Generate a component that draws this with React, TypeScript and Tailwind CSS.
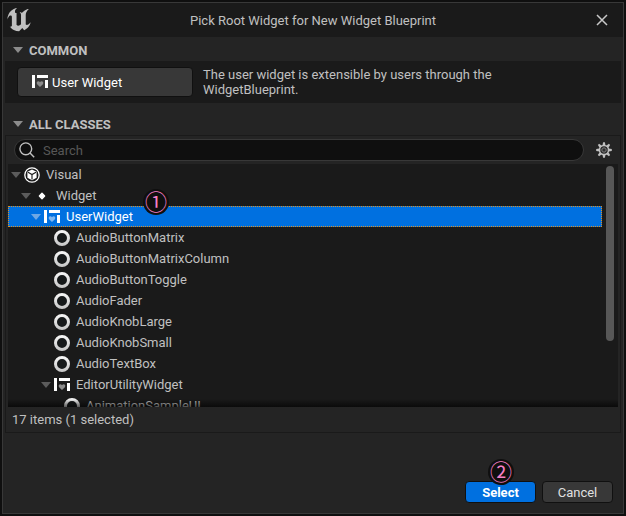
import { useState } from "react";
import clsx from "clsx";

type IconKind = "visual" | "dot" | "widget" | "ring";

interface TreeNode {
  name: string;
  icon: IconKind;
  depth: number;
  hasChildren?: boolean;
}

const nodes: TreeNode[] = [
  { name: "Visual", icon: "visual", depth: 0, hasChildren: true },
  { name: "Widget", icon: "dot", depth: 1, hasChildren: true },
  { name: "UserWidget", icon: "widget", depth: 2, hasChildren: true },
  { name: "AudioButtonMatrix", icon: "ring", depth: 3 },
  { name: "AudioButtonMatrixColumn", icon: "ring", depth: 3 },
  { name: "AudioButtonToggle", icon: "ring", depth: 3 },
  { name: "AudioFader", icon: "ring", depth: 3 },
  { name: "AudioKnobLarge", icon: "ring", depth: 3 },
  { name: "AudioKnobSmall", icon: "ring", depth: 3 },
  { name: "AudioTextBox", icon: "ring", depth: 3 },
  { name: "EditorUtilityWidget", icon: "widget", depth: 3, hasChildren: true },
  { name: "AnimationSampleUI", icon: "ring", depth: 4 },
];

const indents = ["pl-[3px]", "pl-[13px]", "pl-[23px]", "pl-[33px]", "pl-[43px]"];

function UnrealLogo() {
  return (
    <svg viewBox="4.4 5.2 14.9 14.3" className="w-6 h-6 shrink-0" fill="#c0c0c0" aria-hidden="true">
      <path d="M19.13 13.729c-.206.997-1.126 3.557-4.06 4.942l-1.179-1.325-1.988 2a7.338 7.338 0 01-5.804-2.978 2.859 2.859 0 00.65.123c.326.006.678-.114.678-.66v-5.394a.89.89 0 00-1.116-.89c-.92.212-1.656 2.509-1.656 2.509a7.304 7.304 0 012.528-5.597 7.408 7.408 0 013.73-1.721c-1.006.573-1.57 1.507-1.57 2.29 0 1.262.76 1.109.984.923v7.28a1.157 1.157 0 00.148.256 1.075 1.075 0 00.88.445c.76 0 1.747-.868 1.747-.868V9.172c0-.6-.452-1.324-.905-1.572 0 0 .838-.149 1.484.346a5.537 5.537 0 01.387-.425c1.508-1.48 2.929-1.902 4.112-2.112 0 0-2.151 1.69-2.151 3.96 0 1.687.043 5.801.043 5.801.799.771 1.986-.342 3.059-1.441z" />
    </svg>
  );
}

function Arrow({ className }: { className?: string }) {
  return (
    <svg viewBox="0 0 10 6" className={clsx("w-[10px] h-[6px] shrink-0", className)} fill="currentColor" aria-hidden="true">
      <path d="M0 0h10L5 6z" />
    </svg>
  );
}

function WidgetIcon({ heart = "#8c8c8c" }: { heart?: string }) {
  return (
    <svg viewBox="0 0 16 16" className="w-4 h-4 shrink-0" fill="#fff" aria-hidden="true">
      <path d="M0 1h3v13H0zM5 1h11v3H5zM13 6h3v8h-3z" />
      <path fill={heart} d="M8 13 5.1 10.2C4.1 8.6 5 7.2 6.3 7.2c.8 0 1.3.4 1.7 1 .4-.6.9-1 1.7-1 1.3 0 2.2 1.4 1.2 3z" />
    </svg>
  );
}

function VisualIcon() {
  return (
    <svg viewBox="0 0 16 16" className="w-4 h-4 shrink-0" aria-hidden="true">
      <circle cx="8" cy="8" r="7.2" fill="none" stroke="#fff" strokeWidth="1.3" />
      <path fill="#fff" d="M8 2.6 12.6 4.8v5.9L8 13.3l-4.6-2.6V4.8z" />
      <path fill="none" stroke="#1a1a1a" strokeWidth="1.1" d="M4 5.3 8 7.6l4-2.3M8 7.6v5" />
    </svg>
  );
}

function RingIcon() {
  return (
    <svg viewBox="0 0 16 16" className="w-4 h-4 shrink-0" aria-hidden="true">
      <defs>
        <linearGradient id="ring" x1="0" y1="0" x2="0" y2="1">
          <stop offset="0" stopColor="#f4f4f4" />
          <stop offset="1" stopColor="#cacaca" />
        </linearGradient>
      </defs>
      <circle cx="8" cy="8" r="6.5" fill="#16191a" stroke="url(#ring)" strokeWidth="3" />
    </svg>
  );
}

function DotIcon() {
  return (
    <svg viewBox="0 0 16 16" className="w-4 h-4 shrink-0" aria-hidden="true">
      <path fill="#fff" d="M8 5.2 10.6 8 8 10.8 5.4 8z" stroke="#fff" strokeWidth="1.4" strokeLinejoin="round" />
    </svg>
  );
}

function GearIcon() {
  return (
    <svg viewBox="-8 -8 16 16" className="w-4 h-4" aria-hidden="true">
      <g fill="#c0c0c0">
        {[0, 45, 90, 135, 180, 225, 270, 315].map((a) => (
          <path key={a} transform={`rotate(${a})`} d="M-1.5-4.6-.9-7.8H.9L1.5-4.6z" />
        ))}
      </g>
      <circle r="4.5" fill="none" stroke="#c0c0c0" strokeWidth="1.5" />
      <circle r="2.2" fill="#303030" stroke="#808080" strokeWidth="1" />
    </svg>
  );
}

function NodeIcon({ kind, selected }: { kind: IconKind; selected: boolean }) {
  if (kind === "visual") return <VisualIcon />;
  if (kind === "dot") return <DotIcon />;
  if (kind === "widget") return <WidgetIcon heart={selected ? "#7fb7f0" : "#8c8c8c"} />;
  return <RingIcon />;
}

function StepBadge({ label, className }: { label: string; className: string }) {
  return (
    <span
      className={clsx(
        "absolute z-10 flex items-center justify-center w-[26px] h-[26px] pb-1 rounded-full bg-[#0f0f0f] text-[#f57fc6] text-[22px] leading-none font-['Noto_Sans_CJK_JP',sans-serif] pointer-events-none",
        className
      )}
    >
      {label}
    </span>
  );
}

function SectionHeader({ title, className }: { title: string; className: string }) {
  return (
    <h2 className={clsx("flex items-center gap-[6px] pl-[10px] font-bold text-[#c0c0c0]", className)}>
      <Arrow className="text-[#8c8c8c]" />
      {title}
    </h2>
  );
}

function App() {
  const [selected, setSelected] = useState("UserWidget");
  const [search, setSearch] = useState("");

  const visible = nodes.filter((n) => n.name.toLowerCase().includes(search.toLowerCase()));

  return (
    <div className="h-screen p-[2px] bg-[#0f0f0f] font-[Roboto,sans-serif] text-[13px] leading-[15px] text-[#c0c0c0]">
      <div className="flex flex-col h-full border border-[#383838] bg-[#242424] overflow-hidden">
        <header className="flex items-center h-[34px] shrink-0 px-1 bg-[#1a1a1a]">
          <div className="flex-1">
            <UnrealLogo />
          </div>
          <h1>Pick Root Widget for New Widget Blueprint</h1>
          <div className="flex flex-1 justify-end">
            <button aria-label="Close" className="flex items-center justify-center w-[34px] h-6">
              <svg viewBox="0 0 12 12" className="w-3 h-3" stroke="#c8c8c8" strokeWidth="1.5" aria-hidden="true">
                <path d="M1 1l10 10M11 1 1 11" />
              </svg>
            </button>
          </div>
        </header>

        <SectionHeader title="COMMON" className="h-6 shrink-0 pt-[2px]" />
        <section className="flex items-center gap-[10px] mx-[2px] px-3 h-[42px] shrink-0 bg-[#1a1a1a]">
          <button className="flex items-center gap-1 w-44 h-[30px] shrink-0 pl-[14px] rounded border border-[#101010] bg-[#383838] text-white">
            <WidgetIcon />
            User Widget
          </button>
          <p className="max-w-[340px]">
            The user widget is extensible by users through the WidgetBlueprint.
          </p>
        </section>

        <SectionHeader title="ALL CLASSES" className="h-8 shrink-0 pt-[10px]" />
        <section className="flex flex-col flex-1 min-h-0 mx-[2px] border border-[#1a1a1a]">
          <div className="flex items-center gap-3 h-7 shrink-0 px-2">
            <label className="flex items-center flex-1 gap-2 h-[22px] px-1 rounded-full border border-[#383838] bg-[#0f0f0f]">
              <svg viewBox="0 0 16 16" className="w-4 h-4 shrink-0" fill="none" stroke="#c0c0c0" strokeWidth="1.4" aria-hidden="true">
                <circle cx="6.8" cy="6.8" r="5.9" />
                <path d="m11 11 4.2 4.2" />
              </svg>
              <input
                className="flex-1 min-w-0 bg-transparent outline-none placeholder:text-[#575757]"
                placeholder="Search"
                aria-label="Search"
                value={search}
                onChange={(e) => setSearch(e.target.value)}
              />
            </label>
            <button aria-label="Settings" className="shrink-0">
              <GearIcon />
            </button>
          </div>

          <div className="relative flex flex-1 min-h-0 mx-[2px] bg-[#1a1a1a] overflow-hidden">
            <ul role="tree" className="flex-1 min-w-0">
              {visible.map((node) => {
                const active = node.name === selected;
                return (
                  <li key={node.name} role="treeitem" aria-selected={active} className="relative">
                    <button
                      onClick={() => setSelected(node.name)}
                      className={clsx(
                        "flex items-center w-full h-[21px] text-left",
                        indents[node.depth],
                        active && "bg-[#0070e0] text-white outline-1 -outline-offset-1 outline-dotted outline-[#e09020]"
                      )}
                    >
                      <Arrow
                        className={clsx(
                          active ? "text-[#6fa8e4]" : "text-[#5c5c5c]",
                          !node.hasChildren && "invisible"
                        )}
                      />
                      <span className="ml-[3px] mr-[6px]">
                        <NodeIcon kind={node.icon} selected={active} />
                      </span>
                      {node.name}
                    </button>
                    {node.name === "UserWidget" && <StepBadge label="①" className="left-[135px] -top-[17px]" />}
                  </li>
                );
              })}
            </ul>
            <div className="w-4 shrink-0 pt-[2px] pl-1">
              <div className="w-2 h-[175px] rounded-full bg-[#575757]" />
            </div>
            <div className="absolute inset-x-0 bottom-0 h-2 bg-linear-to-t from-black/60 to-transparent pointer-events-none" />
          </div>

          <p className="flex items-center h-[25px] shrink-0 px-[6px]">17 items (1 selected)</p>
        </section>

        <footer className="flex justify-end gap-[6px] shrink-0 pt-12 pb-[10px] pr-[10px]">
          <div className="relative">
            <button className="w-[71px] h-[22px] rounded border border-[#101010] bg-[#0070e0] font-bold text-white">
              Select
            </button>
            <StepBadge label="②" className="left-[23px] -top-[22px]" />
          </div>
          <button className="w-[71px] h-[22px] rounded border border-[#101010] bg-[#383838] text-[#e0e0e0]">
            Cancel
          </button>
        </footer>
      </div>
    </div>
  );
}

export default App;
